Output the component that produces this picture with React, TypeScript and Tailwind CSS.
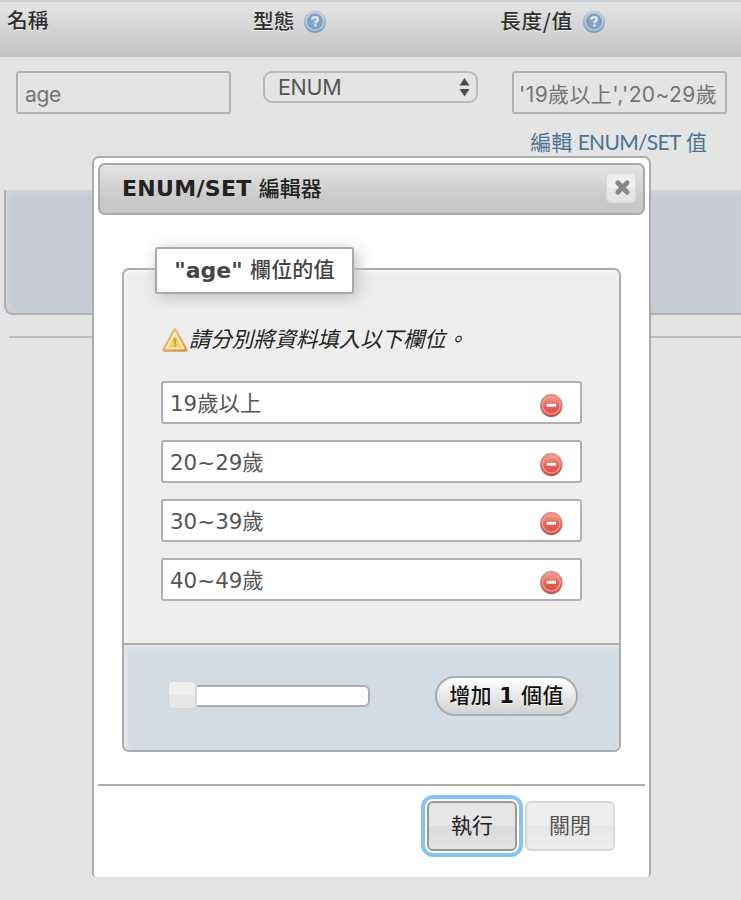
import type { ReactNode } from "react";

const sans = "font-['DejaVu_Sans','Noto_Sans_CJK_TC',sans-serif]";
const system = "font-['Inter','Noto_Sans_CJK_TC',sans-serif]";
const cjk = "font-['Noto_Sans_CJK_TC',sans-serif]";

function HelpIcon() {
  return (
    <svg width="24" height="25" viewBox="0 0 24 25" className="shrink-0">
      <defs>
        <radialGradient id="help" cx=".5" cy=".45" r=".55">
          <stop offset="0" stopColor="#8facca" />
          <stop offset="1" stopColor="#7799bf" />
        </radialGradient>
        <linearGradient id="helpRim" x1="0" y1="0" x2="0" y2="1">
          <stop offset="0" stopColor="#c3d1de" />
          <stop offset="1" stopColor="#7c9dbf" />
        </linearGradient>
      </defs>
      <circle cx="12" cy="12.8" r="11.2" fill="url(#helpRim)" />
      <circle cx="12" cy="12.5" r="8.6" fill="url(#help)" stroke="#bfcfde" strokeWidth="1.3" />
      <path d="M9.200 10.600c0-1.600 1.200-2.400 2.800-2.400s2.900.8 2.900 2.200c0 1.900-2.600 1.900-2.600 3.900" fill="none" stroke="#e2e7eb" strokeWidth="2.300" />
      <rect x="11" y="15.300" width="2.600" height="2.200" fill="#e2e7eb" />
    </svg>
  );
}

function RemoveIcon() {
  return (
    <svg width="24" height="25" viewBox="0 0 24 25" className="shrink-0">
      <defs>
        <linearGradient id="red" x1="0" y1="0" x2="0" y2="1">
          <stop offset="0" stopColor="#f2a592" />
          <stop offset=".5" stopColor="#ea6556" />
          <stop offset="1" stopColor="#e24c4c" />
        </linearGradient>
        <linearGradient id="redRim" x1="0" y1="0" x2="0" y2="1">
          <stop offset="0" stopColor="#e39a98" />
          <stop offset="1" stopColor="#bd5348" />
        </linearGradient>
      </defs>
      <ellipse cx="12.300" cy="12.500" rx="11.200" ry="11.800" fill="url(#redRim)" />
      <circle cx="12.300" cy="12.300" r="8.800" fill="url(#red)" stroke="#ee9c98" strokeWidth="1.200" />
      <rect x="7.100" y="10.300" width="10.200" height="3.700" fill="#fff" stroke="#d8524a" strokeWidth=".6" />
    </svg>
  );
}

function WarningIcon() {
  return (
    <svg width="26" height="25" viewBox="0 0 26 25" className="shrink-0">
      <defs>
        <linearGradient id="warn" x1="0" y1="0" x2="1" y2="1">
          <stop offset="0" stopColor="#f6dc8c" />
          <stop offset="1" stopColor="#d8893c" />
        </linearGradient>
      </defs>
      <path d="M11.800 1.600q1.200-1.600 2.400 0L25 21.200q.6 2-1 2.200H2q-1.600-.2-1-2.200Z" fill="url(#warn)" stroke="#e0a866" strokeWidth="1" strokeLinejoin="round" />
      <path d="M13 5 21.600 20.400H4.400Z" fill="#f5d267" stroke="#fdf0c8" strokeWidth="1.900" strokeLinejoin="round" />
      <path d="M11.500 10.300h3l-.6 5.600h-1.800Z" fill="#c9a343" />
      <rect x="11.800" y="16.600" width="2.400" height="2.200" fill="#c9a343" />
    </svg>
  );
}

function Heading({ children, className }: { children: ReactNode; className: string }) {
  return (
    <div className={`flex items-center gap-[9px] h-[26px] text-[20.700px] font-medium text-[#2f2f2f] whitespace-nowrap [text-shadow:0_1px_0_#f4f4f4] ${cjk} ${className}`}>
      {children}
    </div>
  );
}

const values = ["19歲以上", "20~29歲", "30~39歲", "40~49歲"];

export default function App() {
  return (
    <div className="relative w-[741px] h-[900px] bg-[#e4e4e4] overflow-hidden">
      <header className="flex h-[57px] border-t-2 border-[#c9cfd5] bg-linear-to-b from-[#e5e5e5] to-[#c2c2c2]">
        <Heading className="w-[246px] pl-[7px] mt-[5px]">名稱</Heading>
        <Heading className="w-[247px] pl-[7px] mt-[6px]">型態<HelpIcon /></Heading>
        <Heading className="pl-[7px] mt-[6px]"><span className="tracking-[0.700px]">長度/值</span><HelpIcon /></Heading>
      </header>

      <div className={`flex items-start pt-[14px] pl-[16px] h-[70px] ${system}`}>
        <div className="flex items-center w-[215px] h-[43px] rounded-[3px] border-2 border-[#b0b0b0] pl-[7px] pt-[4px] text-[21px] tracking-[-0.300px] text-[#747474]">age</div>
        <div className="flex items-center justify-between w-[215px] h-[32px] ml-[32px] rounded-[9px] border-2 border-[#b9b9b9] pl-[13px] pr-[6px] text-[21.500px] tracking-[-0.300px] text-[#565656]">
          <span>ENUM</span>
          <svg width="11" height="20" viewBox="0 0 11 20"><path d="M.5 8.500 5.500 1l5 7.500ZM.5 12h10l-5 7.500Z" fill="#4b4b4b" /></svg>
        </div>
        <div className="flex items-center w-[215px] h-[43px] ml-[34px] rounded-[3px] border-2 border-[#b0b0b0] pl-[5px] pt-[4px] overflow-hidden whitespace-nowrap text-[21px] tracking-[0.400px] text-[#747474] [font-feature-settings:'calt'_0]">'19歲以上','20~29歲</div>
      </div>
      <div className="flex justify-end h-[63px] pr-[34px]">
        <span className="h-[30px] leading-[30px] text-[21px] whitespace-nowrap text-[#4a7390] font-['Lato','Noto_Sans_CJK_TC',sans-serif]">編輯 <span className="tracking-[-0.700px]">ENUM/SET</span> 值</span>
      </div>
      <div className="h-[125px] ml-[4px] border-l-2 border-b-2 border-[#b0b0b0] rounded-bl-[9px] bg-[#c7ccd4] shadow-[inset_3px_3px_5px_#d0d5d9]" />
      <div className="mt-[21px] ml-[9px] h-[2px] bg-[#bcbcbc]" />

      <section className="absolute left-[92px] top-[156px] w-[559px] h-[721px] flex flex-col rounded-t-[7px] rounded-b-[4px] border-2 border-b-0 border-[#acacac] bg-white px-[4px] pt-[5px]">
        <div className={`flex items-center justify-between h-[52px] shrink-0 rounded-[7px] border-2 border-[#a9a9a9] bg-linear-to-b from-[#e3e3e3] to-[#c8c8c8] to-75% pl-[22px] pr-[7px] ${sans}`}>
          <h1 className="text-[21px] font-bold text-[#222] whitespace-nowrap"><span className="text-[22px] tracking-[0.300px]">ENUM/SET</span> <span className="font-medium">編輯器</span></h1>
          <button className="flex items-center justify-center w-[30px] h-[30px] -mt-[3px] rounded-[5px] border border-[#dcdcdc] bg-linear-to-b from-[#efefef] from-50% to-[#e5e5e5] to-50%">
            <svg width="17" height="17" viewBox="0 0 17 17" className="-mt-px ml-[3px]"><path d="m3.800 3.800 9.400 9.400m0-9.400-9.400 9.400" stroke="#888" strokeWidth="4.800" strokeLinecap="round" /></svg>
          </button>
        </div>

        <div className="mt-[53px] mx-[24px] h-[484px] shrink-0 flex flex-col rounded-[7px] border-2 border-[#ababab] bg-[#eee] shadow-[inset_1px_1px_4px_#fff]">
          <div className={`ml-[31px] -mt-[23px] w-[199px] h-[47px] shrink-0 flex items-center justify-center rounded-[3px] border-2 border-[#aaa] bg-white shadow-[3px_3px_16px_#bbb] text-[21px] font-bold text-[#444] whitespace-nowrap ${sans}`}>
            <span className="text-[22px]">"age"</span>&nbsp;<span className="font-medium tracking-[0.200px]">欄位的值</span>
          </div>
          <div className={`flex items-center ml-[38px] mt-[33px] h-[26px] text-[21.400px] italic text-[#222] whitespace-nowrap ${cjk}`}>
            <WarningIcon />
            <span className="ml-px -mt-[4px]">請分別將資料填入以下欄位。</span>
          </div>
          <div className="flex flex-col gap-[16px] ml-[37px] mt-[28px] w-[421px]">
            {values.map((value) => (
              <div key={value} className={`flex items-center justify-between h-[43px] rounded-[3px] border-2 border-[#b0b0b0] bg-white pl-[7px] pr-[17px] pt-[5px] text-[21.400px] text-[#555] ${sans}`}>
                <span className="-mt-px">{value}</span>
                <RemoveIcon />
              </div>
            ))}
          </div>
          <div className="mt-auto h-[107px] flex items-center justify-between rounded-b-[5px] border-t-2 border-[#acacac] bg-[#d3dbe3] pl-[43px] pr-[41px] pb-[4px] shadow-[inset_2px_2px_4px_#e9eef2]">
            <div className="relative w-[203px] h-[30px] flex items-center">
              <div className="ml-[14px] w-[189px] h-[22px] rounded-[6px] border-2 border-[#acacac] bg-white" />
              <div className="absolute left-0 -top-px w-[30px] h-[30px] rounded-[5px] border-2 border-[#d7d7d7] bg-linear-to-b from-[#eee] from-50% to-[#e5e5e5] to-50%" />
            </div>
            <button className={`flex items-center justify-center w-[143px] h-[40px] rounded-full border-2 border-[#acacac] bg-linear-to-b from-white to-[#d2d2d2] text-[21px] font-bold text-[#111] whitespace-nowrap pt-[3px] [text-shadow:0_1px_0_#fff] ${sans}`}>
              <span className="font-medium tracking-[0.300px]">增加</span>&nbsp;1&nbsp;<span className="font-medium tracking-[0.300px]">個值</span>
            </button>
          </div>
        </div>

        <footer className={`mt-[32px] flex justify-end gap-[8px] border-t-2 border-[#acacac] pt-[15px] pr-[30px] text-[21px] ${cjk}`}>
          <button className="w-[90px] h-[50px] pb-[2px] rounded-[6px] border-2 border-[#999] bg-linear-to-b from-[#e6e6e6] from-48% via-[#dadada] via-50% to-[#e3e3e3] text-[#222] outline-4 outline-offset-2 outline-[#8bc1fa]">執行</button>
          <button className="w-[90px] h-[50px] pb-[2px] rounded-[6px] border-2 border-[#d7d7d7] bg-linear-to-b from-[#efefef] from-48% via-[#e6e6e6] via-50% to-[#eee] text-[#555]">關閉</button>
        </footer>
      </section>
    </div>
  );
}
